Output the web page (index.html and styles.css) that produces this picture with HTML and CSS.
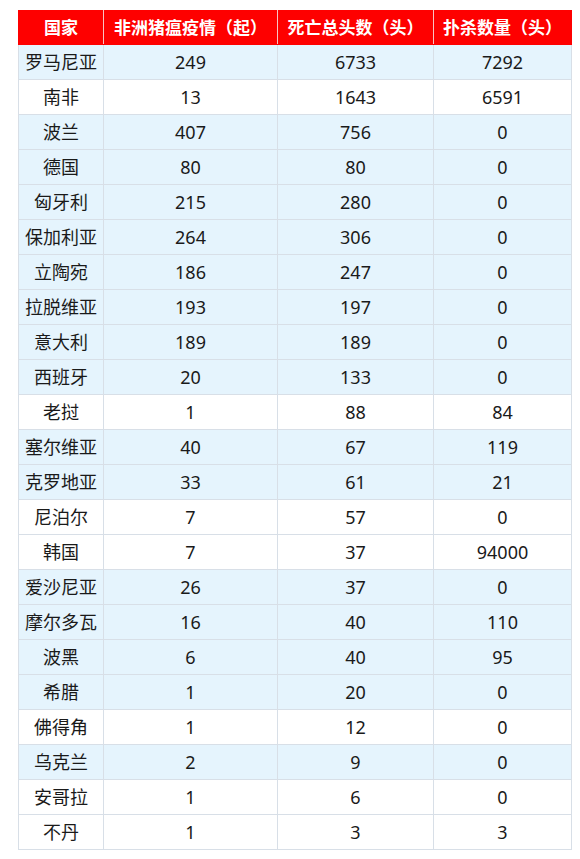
FILE: index.html
```
<!DOCTYPE html>
<html lang="zh-CN">
<head>
<meta charset="utf-8">
<title>非洲猪瘟疫情</title>
<link rel="stylesheet" href="styles.css">
</head>
<body>
<table class="data">
<colgroup>
<col class="c1"><col class="c2"><col class="c3"><col class="c4">
</colgroup>
<thead>
<tr><th>国家</th><th>非洲猪瘟疫情（起）</th><th>死亡总头数（头）</th><th>扑杀数量（头）</th></tr>
</thead>
<tbody>
<tr class="blue"><td>罗马尼亚</td><td>249</td><td>6733</td><td>7292</td></tr>
<tr><td>南非</td><td>13</td><td>1643</td><td>6591</td></tr>
<tr class="blue"><td>波兰</td><td>407</td><td>756</td><td>0</td></tr>
<tr class="blue"><td>德国</td><td>80</td><td>80</td><td>0</td></tr>
<tr class="blue"><td>匈牙利</td><td>215</td><td>280</td><td>0</td></tr>
<tr class="blue"><td>保加利亚</td><td>264</td><td>306</td><td>0</td></tr>
<tr class="blue"><td>立陶宛</td><td>186</td><td>247</td><td>0</td></tr>
<tr class="blue"><td>拉脱维亚</td><td>193</td><td>197</td><td>0</td></tr>
<tr class="blue"><td>意大利</td><td>189</td><td>189</td><td>0</td></tr>
<tr class="blue"><td>西班牙</td><td>20</td><td>133</td><td>0</td></tr>
<tr><td>老挝</td><td>1</td><td>88</td><td>84</td></tr>
<tr class="blue"><td>塞尔维亚</td><td>40</td><td>67</td><td>119</td></tr>
<tr class="blue"><td>克罗地亚</td><td>33</td><td>61</td><td>21</td></tr>
<tr><td>尼泊尔</td><td>7</td><td>57</td><td>0</td></tr>
<tr><td>韩国</td><td>7</td><td>37</td><td>94000</td></tr>
<tr class="blue"><td>爱沙尼亚</td><td>26</td><td>37</td><td>0</td></tr>
<tr class="blue"><td>摩尔多瓦</td><td>16</td><td>40</td><td>110</td></tr>
<tr class="blue"><td>波黑</td><td>6</td><td>40</td><td>95</td></tr>
<tr class="blue"><td>希腊</td><td>1</td><td>20</td><td>0</td></tr>
<tr><td>佛得角</td><td>1</td><td>12</td><td>0</td></tr>
<tr class="blue"><td>乌克兰</td><td>2</td><td>9</td><td>0</td></tr>
<tr><td>安哥拉</td><td>1</td><td>6</td><td>0</td></tr>
<tr><td>不丹</td><td>1</td><td>3</td><td>3</td></tr>
</tbody>
</table>
</body>
</html>
```
FILE: styles.css
```
html, body {
  margin: 0;
  padding: 0;
  background: #ffffff;
}
body {
  padding: 10px 0 0 18px;
  font-family: "Noto Sans", "Noto Sans CJK SC", sans-serif;
  color: #1a1a1a;
}
.data {
  border-collapse: collapse;
  table-layout: fixed;
  width: 553px;
}
.c1 { width: 85px; }
.c2 { width: 174px; }
.c3 { width: 156px; }
.c4 { width: 138px; }
.data th {
  background: #fe0000;
  color: #ffffff;
  font-weight: bold;
  font-size: 17px;
  height: 33px;
  padding: 0;
  text-align: center;
  border-left: 1px solid #f8c4c4;
  border-right: 1px solid #f8c4c4;
  border-top: 1px solid #fe0000;
  border-bottom: 1px solid #fe0000;
  white-space: nowrap;
  line-height: 1;
}
.data th:first-child { border-left-color: #fe0000; }
.data th:last-child { border-right-color: #fe0000; }
.data td {
  height: 34px;
  padding: 0;
  text-align: center;
  font-size: 18px;
  line-height: 1;
  border: 1px solid #d8dfe7;
  background: #ffffff;
}
.data tr.blue td {
  background: #e5f4fd;
}
```
